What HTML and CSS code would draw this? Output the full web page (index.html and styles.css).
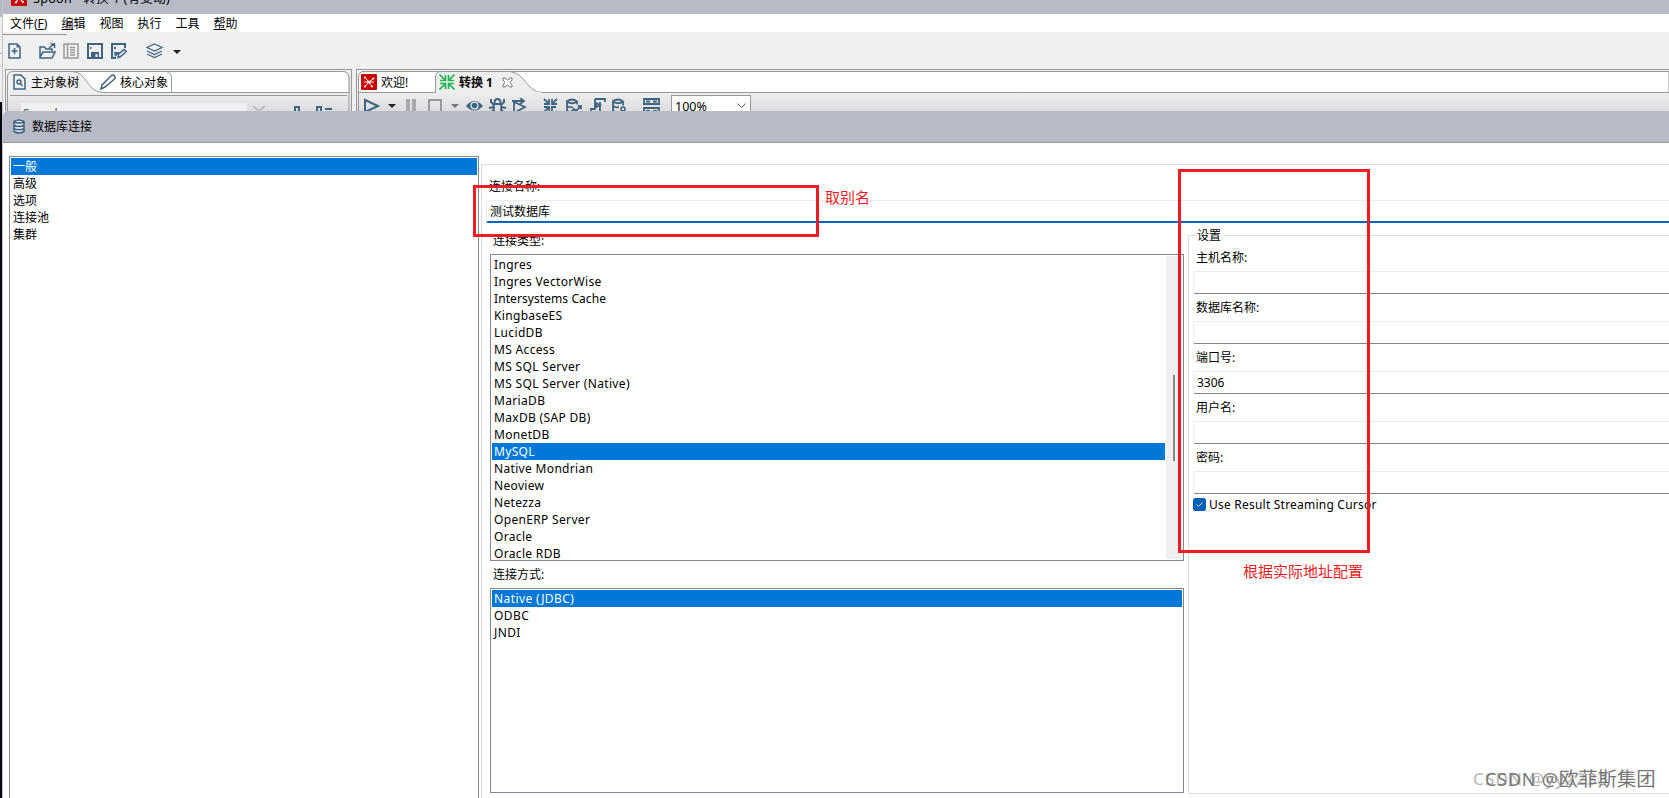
FILE: index.html
```html
<!DOCTYPE html>
<html lang="zh-CN">
<head>
<meta charset="utf-8">
<title>Spoon - 转换 1 (有变动)</title>
<link rel="stylesheet" href="styles.css">
</head>
<body>
<div class="screen">
  <div class="edge"><i class="edge-top"></i><i class="edge-mid"></i><i class="edge-low"></i></div>
  <div class="window">
    <header class="titlebar">
      <svg class="logo" width="16" height="16" viewBox="0 0 16 16"><rect width="16" height="16" rx="1" fill="#c00"/><path d="M8 8 3 3M8 8l5-5M8 8 5 12.500M8 8l4 4M8 8h5M8 8V3" stroke="#fff" stroke-width="1.2"/><g fill="#fff"><circle cx="3.5" cy="3.5" r="1.2"/><circle cx="12.5" cy="3.5" r="1.2"/><circle cx="5" cy="12.3" r="1.1"/><circle cx="12" cy="12" r="1.1"/><circle cx="8" cy="8" r="1.8"/></g></svg>
      <span class="title"><span class="app">Spoon -</span> 转换 1 (有变动)</span>
    </header>
    <nav class="menu"><span class="m1">文件(<u>F</u>)</span><span><u>编</u>辑</span><span>视图</span><span>执行</span><span>工具</span><span><u>帮</u>助</span></nav>
    <div class="toolbar">
      <svg class="t-new" width="14" height="16" viewBox="0 0 14 16"><path d="M1 1h8l3 3v11H1zM6.500 5v6M3.500 8h6" class="ln"/><path d="M8.500 1v3.500H12z" fill="#3f6482"/></svg>
      <svg class="t-open" width="17" height="16" viewBox="0 0 17 16"><path d="M13 8V6H7L5.500 4H1v11h12l3-6H4L1 14M10 5l5-4M11.500 1H15.500v4" class="ln"/></svg>
      <svg class="t-list" width="16" height="16" viewBox="0 0 16 16"><path d="M1 1h14v14H1zM4.500 1v14M7 4.500h5M7 7h5M7 9.500h5M7 12h5" stroke="#999" stroke-width="1.500" fill="none"/></svg>
      <svg class="t-save" width="16" height="16" viewBox="0 0 16 16"><path d="M1 1h14v14H1z" class="ln2"/><path d="M4 9h8v6H4z" fill="#3f6482"/><path d="M8.500 11h2v3h-2z" fill="#f0f0f0"/><path d="M3 4h1.500v2H3z" fill="#3f6482"/></svg>
      <svg class="t-saveas" width="17" height="16" viewBox="0 0 17 16"><path d="M14 5V1H1v14h4" class="ln2"/><path d="M3 9h6l-5 5zM3 4h2v2H3z" fill="#3f6482"/><path d="M7 14.500l.7-3.500 5.500-4.500 2 2-5.500 5z" class="ln"/></svg>
      <svg class="t-layer" width="17" height="16" viewBox="0 0 17 16"><path d="M8.500 1 16 4.500 8.500 8 1 4.500zM1 8l7.500 3.500L16 8M1 11l7.500 3.500L16 11" class="ln thin"/></svg>
      <svg class="t-arrow" width="8" height="5" viewBox="0 0 8 5"><path d="M0 0h8L4 4z" fill="#222"/></svg>
    </div>
    <div class="panes">
      <section class="pane left">
        <svg class="tabline" width="345" height="42" viewBox="0 0 345 42"><path d="M1.500 41V6Q2 1.500 7 1.500H337Q343 2 343 8V41" fill="none" stroke="#999"/><path d="M66.500 1.500H337Q343 2 343 8V22.500H97C80 22 82 2.500 66.500 1.500" fill="#fff" stroke="#999"/><path d="M160 1.500Q165 2 165.500 8V22" class="tabedge"/><path d="M4 25.500H341" stroke="#999"/></svg>
        <div class="tabs">
          <svg width="13" height="16" viewBox="0 0 13 16"><path d="M1 1h7l4 4v10H1z" class="ln"/><circle cx="6" cy="8" r="2" class="ln"/><path d="m7.500 10 2 2" class="ln"/></svg><span class="tree">主对象树</span>
          <svg class="pencil" width="16" height="16" viewBox="0 0 16 16"><path d="m1 15 1-4L11 2q2-2 3.500 0t0 3L5 13z" class="ln"/></svg><span>核心对象</span>
        </div>
        <div class="search"><div class="field">Search</div>
          <svg class="sx" width="90" height="8" viewBox="0 0 90 8"><path d="m1 0 6 5 6-5" stroke="#bbb" stroke-width="2" fill="none"/><path d="M43 1h4v7h-4zM65 1h4v7h-4zM73 3h7" class="ln2"/></svg></div>
      </section>
      <section class="pane right">
        <svg class="tabline" width="1312" height="42" viewBox="0 0 1312 42"><path d="M1.500 41V6Q2 1.500 7 1.500H1312V22.500H1.500" fill="#fff" stroke="#999"/><path d="M78.500 22V7Q79 1.500 84 1.500H153C170 4 168 21 185 22.500" fill="#eee" stroke="#999"/><path d="M79 22.500H184" stroke="#eee" stroke-width="1.500"/></svg>
        <div class="tabs">
          <svg width="16" height="16" viewBox="0 0 16 16"><rect width="16" height="16" rx="1" fill="#c00"/><path d="M8 8 4 3.500M8 8l4.500-3.500M8 8l-4 4.500M8 8l3 4.500M8 8h5M8 8H3" stroke="#fff"/><g fill="#fff"><circle cx="8" cy="8" r="1.600"/><circle cx="4" cy="3.500" r="1"/><circle cx="12.500" cy="4.500" r="1"/><circle cx="4" cy="12.500" r="1"/><circle cx="11" cy="12.500" r="1"/></g></svg><span class="welcome">欢迎!</span>
          <svg class="green" width="16" height="16" viewBox="0 0 16 16"><path d="m.5.500 5.500 5.500M6.500 1v5.500H1M15.500.500 10 6M9.500 1v5.500H15M.5 15.500 6 10M1 9.500h5.500V15M15.500 15.500 10 10M9.500 15V9.500H15" fill="none" stroke="#22b455" stroke-width="1.700"/></svg><b>转换 1</b>
          <svg class="close" width="11" height="11" viewBox="0 0 11 11"><path d="M1 1h2l2.500 2L8 1h2v2L8 5.500 10 8v2H8L5.500 8 3 10H1V8l2-2.500L1 3z" fill="#fff" stroke="#777"/></svg>
        </div>
        <div class="runbar">
          <svg class="run" width="310" height="18" viewBox="0 0 310 18"><path d="m2 2 13 6L2 14z" class="ln2"/><path d="M25 6h8l-4 4z" fill="#222"/><path d="M43 1h4v15h-4zM49 1h4v15h-4z" fill="#aaa"/><path d="M66 2h12v14H66z" stroke="#999" stroke-width="2" fill="none"/><path d="M88 6h8l-4 4z" fill="#777"/><path d="M103 8q8-10 17 0-9 9-17 0z" fill="#3f6482"/><circle cx="111.500" cy="7.500" r="4" fill="#f0f0f0"/><circle cx="111.500" cy="7.500" r="2.800" fill="#3f6482"/><path d="M131 6q-1 7 1 9M138 6q1 7-1 9M131 6h7M131.500 5q0-4 3-4t3 4M128 1v3l3 3M141 1v3l-3 3M126 10l5-1M143 10l-5-1M128 16v-2l3-2M141 16v-2l-3-2" class="ln2"/><path d="M151 4v11l11-6-11-5M149 3h11M157 0l4 3-4 3M181 1l4.500 4.500M186 1v5h-5M194 1l-4.500 4.500M189 1v5h5M181 14l4.500-4.500M181 9h5v5M194 14l-1-1M189 14V9h4M204 3.500q5-4 10 0-5 3.500-10 0v9q2 2 5 2M214 3.500v3M204 8q3 2 6 1M208 14l3-3 2 2 5-5M215 8h3v3M232 1h10v3M232 1v10h-4v4h9V4M233 5l4 2-4 2zM250 3.500q5-4 10 0-5 3.500-10 0v9q2 2 5 2M260 3.500v4M250 8q3 2 6 1" class="ln mid"/><circle cx="260" cy="11" r="2" class="ln"/><path d="M281 1h15v5h-15zM281 10h15v6h-15zM283 3.500h4M290 3.500h4M283 13h4M290 13h4" class="ln mid"/></svg>
          <div class="combo"><span>100%</span><svg width="9" height="6" viewBox="0 0 9 6"><path d="m.5.500 4 4 4-4" fill="none" stroke="#555"/></svg></div>
        </div>
      </section>
    </div>
    <section class="dialog">
      <header class="dialog-title"><svg width="12" height="15" viewBox="0 0 12 15"><path d="M1 2.500Q6-.5 11 2.500v10Q6 15.500 1 12.500z" fill="#dfe3ea"/><path d="M1 2.500Q6-.5 11 2.500v10Q6 15.500 1 12.500zM1 3q5 2 10 0M1 6.500q5 2 10 0M1 9.800q5 2 10 0" class="ln"/></svg><span>数据库连接</span></header>
      <div class="dialog-body">
        <ul class="list nav"><li class="sel">一般</li><li>高级</li><li>选项</li><li>连接池</li><li>集群</li></ul>
        <div class="group">
          <label class="name-label">连接名称:</label>
          <div class="input name"><span>测试数据库</span></div>
          <div class="columns">
            <div class="types">
              <label class="type-label">连接类型:</label>
              <div class="list dbs"><ul>
                <li><span>Ingres</span></li><li><span>Ingres VectorWise</span></li><li><span class="tight">Intersystems Cache</span></li><li><span>KingbaseES</span></li><li><span>LucidDB</span></li><li><span>MS Access</span></li><li><span>MS SQL Server</span></li><li><span>MS SQL Server (Native)</span></li><li><span>MariaDB</span></li><li><span>MaxDB (SAP DB)</span></li><li><span>MonetDB</span></li><li class="sel"><span>MySQL</span></li><li><span>Native Mondrian</span></li><li><span>Neoview</span></li><li><span>Netezza</span></li><li><span>OpenERP Server</span></li><li><span>Oracle</span></li><li><span>Oracle RDB</span></li></ul>
                <div class="scroll"><i></i></div></div>
              <label class="way-label">连接方式:</label>
              <ul class="list ways"><li class="sel">Native (JDBC)</li><li>ODBC</li><li>JNDI</li></ul>
            </div>
            <div class="settings">
              <span class="legend">设置</span>
              <label>主机名称:</label><div class="input"></div>
              <label>数据库名称:</label><div class="input"></div>
              <label>端口号:</label><div class="input"><span>3306</span></div>
              <label>用户名:</label><div class="input"></div>
              <label>密码:</label><div class="input"></div>
              <div class="check"><svg width="13" height="13" viewBox="0 0 13 13"><rect width="13" height="13" rx="2.500" fill="#005fb8"/><path d="m3.500 6.500 2 2 4-4" fill="none" stroke="#cde"/></svg><span>Use Result Streaming Cursor</span></div>
            </div>
          </div>
        </div>
      </div>
    </section>
  </div>
  <div class="mark mark-name"></div><span class="note note-name">取别名</span>
  <div class="mark mark-host"></div><span class="note note-host">根据实际地址配置</span>
  <span class="wm wm-back">CSDN @yy2233</span><span class="wm wm-front"><span class="wm-latin">CSDN @</span>欧菲斯集团</span>
</div>
</body>
</html>
```
FILE: styles.css
```css
* { box-sizing: border-box; }
body { margin: 0; font: 12px/17px "Noto Sans", "Noto Sans CJK SC", sans-serif; color: #000; }
ul { margin: 0; padding: 0; list-style: none; }
svg { display: block; flex: none; }
.ln { fill: none; stroke: #3f6482; stroke-width: 1.500; }
.ln2 { fill: none; stroke: #3f6482; stroke-width: 2; }
.thin { stroke-width: 1.200; }
.mid { stroke-width: 1.800; }
.screen { position: relative; width: 1669px; height: 798px; overflow: hidden; display: flex; background: #b8bac6; }
.edge { width: 3px; flex: none; display: flex; flex-direction: column; border-right: 1px solid #c4c5cd; }
.edge-top { height: 17px; background: #b8bac6; }
.edge-mid { height: 85px; background: linear-gradient(#eee 36px, #bbb 36px, #bbb 37px, #eee 37px); }
.edge-low { flex: 1; background: #080410; }
.window { width: 1666px; flex: none; display: flex; flex-direction: column; background: #f0f0f0; }
.titlebar { height: 14px; background: #b8bac6; display: flex; align-items: flex-end; overflow: hidden; }
.logo { margin: 0 6px 8px 8px; }
.title { height: 24px; font-size: 12.5px; line-height: 24px; margin-bottom: 3px; white-space: nowrap; letter-spacing: .3px; }
.menu { height: 18px; background: #fff; display: flex; padding-left: 7px; gap: 14px; line-height: 19px; }
.menu u { text-underline-offset: 1px; }
.toolbar { height: 37px; display: flex; padding: 11px 0 0 5px; align-items: flex-start; background: linear-gradient(#999, #999) 0 2px / 64px 1px no-repeat; }
.t-open { margin-left: 17px; } .t-list { margin-left: 7px; } .t-save { margin-left: 8px; } .t-saveas { margin-left: 8px; } .t-layer { margin-left: 18px; } .t-arrow { margin: 7px 0 0 10px; }
.panes { height: 42px; display: flex; gap: 4px; padding-left: 2px; overflow: hidden; }
.pane { position: relative; height: 44px; flex: none; border: 1px solid #999; background: linear-gradient(#f0f0f0 20px, #dcdcdc); }
.left { width: 347px; } .right { width: 1315px; }
.tabline { position: absolute; left: 0; top: 0; }
.tabedge { fill: none; stroke: #999; }
.tabs { position: relative; height: 26px; display: flex; align-items: center; padding: 0 0 2px 7px; }
.tree { margin-left: 5px; } .pencil { margin: 0 4px 0 21px; }
.search { position: relative; display: flex; padding: 6px 0 0 14px; }
.field { width: 228px; height: 22px; border: 1px solid #e2e2e2; background: #f0f0f0; color: #555; padding: 2px 0 0 2px; letter-spacing: .2px; }
.sx { margin: 4px 0 0 4px; }
.right .tabs { padding-left: 4px; }
.welcome { margin-left: 4px; width: 58px; } .right b { margin-left: 4px; } .close { margin-left: 9px; }
.runbar { position: relative; display: flex; padding-left: 6px; margin-top: 2px; }
.combo { width: 80px; height: 22px; margin: -3px 0 0 -2px; border: 1px solid #999; border-bottom: 0; background: #fff; display: flex; justify-content: space-between; align-items: center; padding: 0 4px 1px 3px; font-size: 12.5px; }
.dialog { height: 687px; display: flex; flex-direction: column; background: #fff; border-radius: 5px 0 0 0; overflow: hidden; }
.dialog-title { height: 32px; flex: none; background: #b8bac6; border-bottom: 1px solid #999; display: flex; align-items: center; gap: 7px; padding-left: 10px; }
.dialog-body { display: flex; flex: 1; padding-left: 6px; }
.list { border: 1px solid #828790; background: #fff; padding: 1px; overflow: hidden; }
.list li { height: 17px; line-height: 17px; padding-left: 2px; }
.list .sel { background: #0078d7; color: #fff; }
.nav { width: 470px; flex: none; height: 660px; margin-top: 13px; }
.group { width: 1200px; flex: none; margin: 21px 0 0 2px; border: solid #dcdcdc; border-width: 1px 0 0 1px; height: 640px; padding-left: 4px; }
.name-label { display: block; padding: 13px 0 0 3px; height: 35px; }
.input { border: 1px solid #ececec; border-bottom-color: #868686; border-radius: 2px 0 0 2px; height: 23px; line-height: 22px; padding-left: 3px; }
.input.name { border-bottom: 2px solid #0067c0; }
.columns { display: flex; gap: 4px; }
.types { width: 698px; flex: none; padding-left: 4px; }
.types label { display: block; padding-left: 3px; }
.type-label { height: 31px; padding-top: 9px; }
.dbs { display: flex; height: 307px; letter-spacing: .33px; }
.dbs .tight { letter-spacing: .08px; }
.dbs ul { flex: 1; }
.scroll { width: 16px; margin-left: 1px; background: #f0f0f0; padding: 119px 0 0 7px; }
.scroll i { display: block; width: 2px; height: 86px; background: #888; }
.way-label { height: 27px; padding-top: 5px; }
.ways { height: 205px; letter-spacing: .4px; }
.settings { position: relative; width: 490px; height: 559px; margin-top: 12px; border: solid #dcdcdc; border-width: 1px 0 1px 1px; padding: 13px 0 0 4px; }
.legend { position: absolute; left: 6px; top: -9px; background: #fff; padding: 0 3px 0 2px; }
.settings label { display: block; height: 27px; padding: 0 0 0 3px; }
.settings label + .input { margin-top: -5px; margin-bottom: 5px; }
.check { display: flex; align-items: center; gap: 3px; margin-top: -3px; letter-spacing: .22px; }
.mark { position: absolute; border: 3px solid #ef1c24; }
.mark-name { left: 473px; top: 185px; width: 346px; height: 52px; }
.mark-host { left: 1178px; top: 169px; width: 192px; height: 384px; }
.note { position: absolute; color: #ed1c24; font-size: 15px; line-height: 20px; white-space: nowrap; }
.note-name { left: 825px; top: 187px; }
.note-host { left: 1243px; top: 561px; }
.wm { position: absolute; top: 767px; line-height: 24px; white-space: nowrap; }
.wm-back { left: 1473px; color: #b4b4b4; font-size: 17px; letter-spacing: 1.2px; }
.wm-front { left: 1485px; color: #777; font-size: 19.4px; }
.wm-latin { font-size: 18px; letter-spacing: .8px; }
```
